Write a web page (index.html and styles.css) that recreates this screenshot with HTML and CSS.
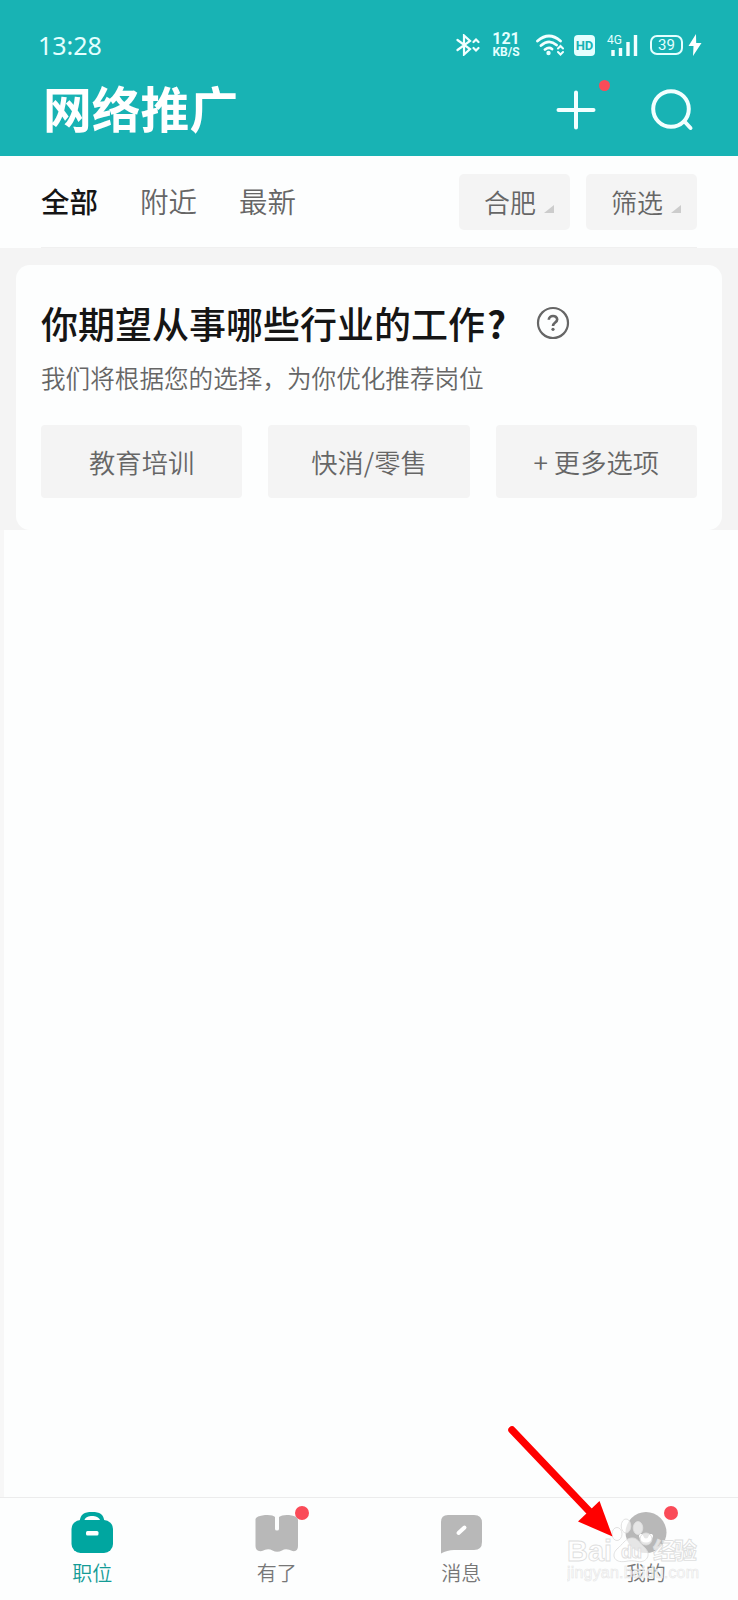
FILE: index.html
```html
<!DOCTYPE html>
<html lang="zh-CN">
<head>
    <meta charset="UTF-8">
    <meta name="viewport" content="width=device-width, initial-scale=1.0">
    <title>网络推广</title>
    <link rel="stylesheet" href="styles.css">
</head>
<body>
    <div class="app">
        <header>
            <div class="status-bar">
                <span class="time">13:28</span>
                <div class="status-icons">
                    <svg class="bluetooth" width="24" height="22" viewBox="0 0 24 22">
                        <path d="M1.500 6 L14 15 L8 20.500 V1.500 L14 7 L1.500 16" />
                        <path d="M17.500 8 L20 5.500 L22.500 8 M17.500 14 L20 16.500 L22.500 14" />
                    </svg>
                    <span class="speed"><b>121</b><small>KB/S</small></span>
                    <svg class="wifi" width="28" height="22" viewBox="0 0 28 22">
                        <path d="M1.500 7 Q13 -3 24.500 7 M5 11.500 Q13 4.500 20.500 11 M9 15.500 Q13 12.500 16 15" />
                        <circle cx="12.500" cy="19" r="2.200" />
                        <path class="thin" d="M22 14.500 L24.500 12 L27 14.500 M22 18 L24.500 20.500 L27 18" />
                    </svg>
                    <span class="hd">HD</span>
                    <span class="signal">
                        <small>4G</small>
                        <svg width="31" height="22" viewBox="0 0 31 22">
                            <path d="M6 16 V22 M13.500 14 V22 M21 8 V22 M28.500 1 V22" />
                        </svg>
                    </span>
                    <span class="battery">39</span>
                    <svg class="bolt" width="14" height="22" viewBox="0 0 14 22">
                        <path d="M8 0 L0.500 12 H5.500 L5 22 L13.500 9 H8.200 Z" />
                    </svg>
                </div>
            </div>
            <div class="title-bar">
                <h1>网络推广</h1>
                <div class="actions">
                    <span class="add">
                        <svg width="40" height="40" viewBox="0 0 40 40">
                            <path d="M20 2.500 V37.500 M2.500 20 H37.500" />
                        </svg>
                        <i class="dot dot-small"></i>
                    </span>
                    <svg width="44" height="44" viewBox="0 0 44 44">
                        <circle cx="21" cy="21" r="17.800" />
                        <path d="M34.500 33.500 L40.500 40" />
                    </svg>
                </div>
            </div>
        </header>

        <div class="filter-bar">
            <div class="tabs">
                <span class="tab active">全部</span>
                <span class="tab">附近</span>
                <span class="tab">最新</span>
            </div>
            <div class="filters">
                <span class="filter">合肥<i class="corner"></i></span>
                <span class="filter">筛选<i class="corner"></i></span>
            </div>
        </div>

        <div class="survey">
            <div class="card">
                <div class="card-title">
                    <h2>你期望从事哪些行业的工作<span>?</span></h2>
                    <svg width="34" height="34" viewBox="0 0 34 34">
                        <circle cx="17" cy="17" r="15" />
                        <path class="mark" d="M12.800 13.800 C12.800 8.800 21.200 8.800 21.200 13.600 C21.200 16.500 17 16.700 17 20" />
                        <circle class="point" cx="17" cy="23.300" r="1.600" />
                    </svg>
                </div>
                <p>我们将根据您的选择，为你优化推荐岗位</p>
                <div class="options">
                    <span class="option">教育培训</span>
                    <span class="option">快消/零售</span>
                    <span class="option">+ 更多选项</span>
                </div>
            </div>
        </div>

        <main></main>

        <nav>
            <div class="nav-item active">
                <span class="nav-icon">
                    <svg width="44" height="44" viewBox="0 0 44 44">
                        <path d="M9.500 12 C10.500 4 14 2 22 2 C30 2 33.500 4 34.500 12 Z" />
                        <rect x="1.500" y="10" width="41.500" height="33" rx="9" />
                        <path class="cut" d="M14.500 10 C16 4.800 28 4.800 30 10 Z" />
                        <rect class="cut" x="16" y="21" width="12.500" height="4.500" rx="1.500" />
                    </svg>
                </span>
                <span>职位</span>
            </div>
            <div class="nav-item">
                <span class="nav-icon">
                    <svg width="44" height="44" viewBox="0 0 44 44">
                        <path d="M0.500 9 Q1 6 10 5 Q18 4.500 20 7 V19 Q20 20.500 22 20.500 Q24 20.500 24 19 V7 Q27 4.500 34 5 Q43 6 43 10 V36 Q43 42 37.500 41 Q31 38 27 40.500 Q22 43 17.500 40.500 Q13 38 7 41 Q0.500 42 0.500 36 Z" />
                    </svg>
                    <i class="dot"></i>
                </span>
                <span>有了</span>
            </div>
            <div class="nav-item">
                <span class="nav-icon">
                    <svg width="44" height="44" viewBox="0 0 44 44">
                        <path d="M9 5 H35 Q43 5 43 13 V32 Q43 40 35 40 H15 Q8 40 2 43.500 V12 Q2 5 9 5 Z" />
                        <path class="pen" d="M19.500 23 L25.500 17.500" />
                    </svg>
                </span>
                <span>消息</span>
            </div>
            <div class="nav-item">
                <span class="nav-icon">
                    <svg width="44" height="44" viewBox="0 0 44 44">
                        <circle cx="22" cy="22.500" r="20.500" />
                        <path class="smile" d="M17 26 C19 32 25 32 27 26" />
                    </svg>
                    <i class="dot"></i>
                </span>
                <span>我的</span>
            </div>
        </nav>

        <svg class="watermark" width="136" height="70" viewBox="0 0 136 70">
            <g class="paw">
                <ellipse cx="50" cy="21" rx="5" ry="6.500" />
                <ellipse cx="59" cy="13" rx="4.800" ry="7" />
                <ellipse cx="71" cy="15" rx="4.800" ry="6.500" />
                <ellipse cx="79" cy="26" rx="6" ry="6" />
                <path d="M64 25 C70 24 73 30 78 35 C85 42 79 50 71 48.500 C66 47.500 63 47.500 58 48.500 C47 50 44 42 50 36 C56 31 58 26 64 25 Z" />
            </g>
            <text class="brand" x="0" y="48" textLength="45" lengthAdjust="spacingAndGlyphs">Bai</text>
            <text class="du" x="54" y="45" textLength="21">du</text>
            <text class="brand-cn" x="86" y="46" textLength="44">经验</text>
            <text class="site" x="0" y="65" textLength="132">jingyan.baidu.com</text>
        </svg>
        <svg class="arrow" width="110" height="116" viewBox="0 0 110 116">
            <path d="M8 6 L86 88" />
            <path class="head" d="M95.500 77 L108.500 112.500 L74 97.500 Z" />
        </svg>
    </div>
</body>
</html>
```
FILE: styles.css
```css
:root {
    --primary: #18b3b4;
    --active: #00a6a0;
    --white: #fdfefe;
    --gray: #f4f4f4;
    --icon: #b8b8b8;
    --text: #666;
    --dark: #151515;
    --red: #fa4b58;
}

* {
    margin: 0;
    padding: 0;
    box-sizing: border-box;
}

body {
    font-family: "Noto Sans CJK SC", sans-serif;
    font-weight: 350;
    background: var(--white);
    color: var(--text);
}

.app {
    position: relative;
    width: 738px;
    height: 1600px;
    display: flex;
    flex-direction: column;
    overflow: hidden;
}

svg {
    display: block;
    flex: none;
}

header {
    height: 156px;
    background: var(--primary);
    color: #fff;
    font-weight: 400;
}

header svg {
    fill: none;
    stroke: #f2ffff;
    stroke-width: 4;
    stroke-linecap: round;
}

.status-bar {
    height: 66px;
    padding: 24px 36px 0 38px;
    display: flex;
    justify-content: space-between;
    align-items: center;
    color: #e4ffff;
}

.time {
    font-family: "Noto Sans", sans-serif;
    font-size: 25px;
    line-height: 40px;
    margin-bottom: 1px;
}

.status-icons {
    display: flex;
    align-items: center;
    font-family: Roboto, sans-serif;
}

.status-icons .bluetooth {
    stroke-width: 2.2;
    margin-right: 12px;
}

.speed {
    width: 28px;
    margin-right: 16px;
    display: flex;
    flex-direction: column;
    align-items: center;
    line-height: 13px;
}

.speed b {
    font-size: 16px;
    line-height: 14px;
}

.speed small {
    font-size: 12px;
    font-weight: bold;
}

.status-icons .wifi {
    stroke-width: 2.8;
    margin-right: 10px;
}

.wifi circle {
    fill: #e4ffff;
    stroke: none;
}

.wifi .thin {
    stroke-width: 2;
}

.hd {
    width: 21px;
    height: 21px;
    margin-right: 12px;
    border-radius: 4px;
    background: #e4ffff;
    color: var(--primary);
    font-size: 13px;
    font-weight: bold;
    line-height: 22px;
    text-align: center;
}

.signal {
    position: relative;
    margin-right: 12px;
}

.signal small {
    position: absolute;
    left: 0;
    top: 0;
    font-size: 12px;
    line-height: 12px;
}

.signal svg {
    stroke-width: 3.4;
    stroke-linecap: butt;
}

.battery {
    width: 33px;
    height: 20px;
    margin-right: 5px;
    border: 2px solid #e4ffff;
    border-radius: 7px;
    font-size: 15px;
    line-height: 17px;
    text-align: center;
}

.status-icons .bolt {
    fill: #fff;
    stroke: none;
}

.title-bar {
    height: 90px;
    padding: 0 44px 0 43px;
    display: flex;
    justify-content: space-between;
    align-items: center;
}

h1 {
    font-size: 48.8px;
    font-weight: 700;
    line-height: 84px;
    margin-bottom: 9px;
}

.actions {
    display: flex;
    align-items: center;
    gap: 54px;
    margin-bottom: 2px;
}

.add {
    position: relative;
}

.dot {
    position: absolute;
    left: 40px;
    top: -4px;
    width: 14px;
    height: 14px;
    border-radius: 50%;
    background: var(--red);
}

.dot-small {
    left: 43px;
    top: -10px;
    width: 11px;
    height: 11px;
}

.filter-bar {
    height: 92px;
    margin: 0 41px;
    display: flex;
    justify-content: space-between;
    align-items: center;
    border-bottom: 1px solid #f0f0f0;
}

.tabs {
    display: flex;
    gap: 42px;
    font-size: 28.5px;
    line-height: 40px;
    margin-bottom: 2px;
}

.tab.active {
    color: var(--dark);
    font-weight: 500;
}

.filters {
    display: flex;
    gap: 16px;
}

.filter {
    width: 111px;
    height: 56px;
    padding-left: 25px;
    border-radius: 5px;
    background: var(--gray);
    display: flex;
    font-size: 26px;
    line-height: 56px;
}

.corner {
    margin: 31px 0 0 8px;
    border-left: 10px solid transparent;
    border-bottom: 8px solid #ccc;
    height: 0;
}

.survey {
    height: 282px;
    padding: 17px 16px 0;
    background: var(--gray);
}

.card {
    height: 265px;
    padding: 31px 25px;
    border-radius: 14px;
    background: var(--white);
}

.card-title {
    height: 54px;
    display: flex;
    align-items: center;
    gap: 30px;
}

.card-title svg {
    margin-top: -1px;
    fill: none;
    stroke: var(--text);
    stroke-width: 2.2;
}

.card-title .mark {
    stroke-width: 2.6;
}

.card-title .point {
    fill: var(--text);
    stroke: none;
}

h2 {
    color: var(--dark);
    font-size: 37px;
    font-weight: 500;
    line-height: 54px;
    white-space: nowrap;
}

h2 span {
    margin-left: 2px;
    font-weight: 700;
}

.card p {
    font-size: 24.6px;
    line-height: 36px;
    margin-top: 9px;
}

.options {
    margin-top: 30px;
    display: grid;
    grid-template-columns: repeat(3, 1fr);
    gap: 26px;
}

.option {
    height: 73px;
    border-radius: 4px;
    background: var(--gray);
    font-size: 26.3px;
    line-height: 73px;
    text-align: center;
}

main {
    flex: 1;
    border-left: 4px solid #f7f7f7;
}

nav {
    height: 103px;
    border-top: 1px solid #ececec;
    display: grid;
    grid-template-columns: repeat(4, 1fr);
}

.nav-item {
    padding-top: 12px;
    display: flex;
    flex-direction: column;
    align-items: center;
    font-size: 20px;
    line-height: 30px;
    color: #777;
}

.nav-icon {
    position: relative;
    margin-bottom: 4px;
    fill: var(--icon);
}

.nav-item.active {
    color: #139b96;
}

.active .nav-icon {
    fill: var(--active);
}

.cut {
    fill: #fff;
}

.pen,
.smile {
    fill: none;
    stroke: #fff;
    stroke-width: 4;
    stroke-linecap: round;
}

.watermark {
    position: absolute;
    left: 567px;
    top: 1513px;
    fill: #fff;
    fill-opacity: 0.65;
    stroke: #dedede;
    stroke-width: 0.9;
    font-family: "Liberation Sans", "Noto Sans CJK SC", sans-serif;
}

.brand {
    font-size: 30px;
    font-weight: bold;
}

.du {
    font-size: 18px;
    font-weight: bold;
}

.brand-cn {
    font-size: 23px;
    font-weight: bold;
}

.site {
    font-size: 16px;
    stroke: #e6e6e6;
    stroke-width: 0.6;
}

.arrow {
    position: absolute;
    left: 504px;
    top: 1424px;
    fill: none;
    stroke: #f00;
    stroke-width: 7.5;
    stroke-linecap: round;
}

.arrow .head {
    fill: #f00;
    stroke: none;
}
```
